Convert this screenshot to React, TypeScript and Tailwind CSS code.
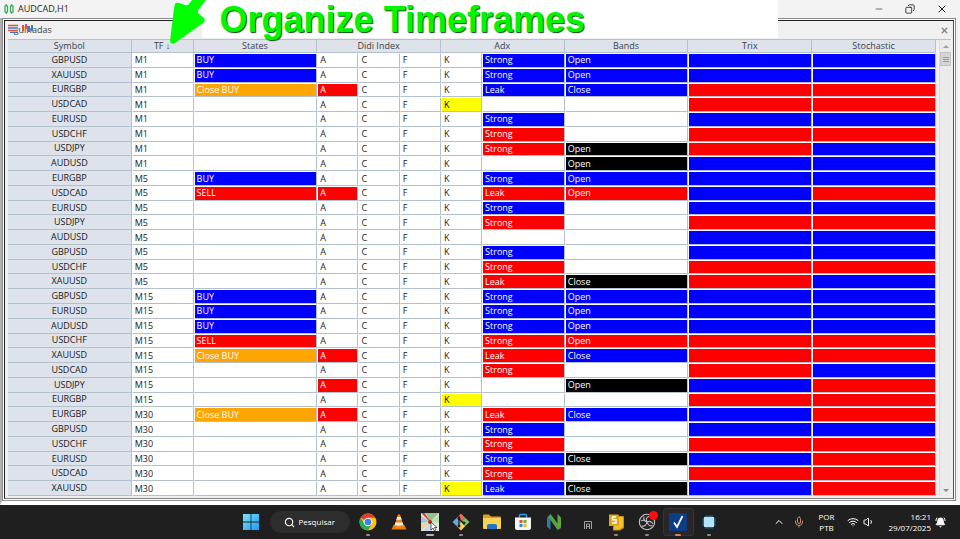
import type { ReactNode } from 'react';
import { BellRing, ChevronUp, Copy, Mic, Minus, Search, Volume1, Wifi, X } from 'lucide-react';

type Color = 'blue' | 'red' | 'orange' | 'yellow' | 'black' | 'none';

const CELL_COLORS: Record<Color, string> = {
  blue: 'bg-[#0000ff] text-white',
  red: 'bg-[#ff0000] text-white',
  orange: 'bg-[#ffa500] text-white',
  yellow: 'bg-[#ffff00] text-black',
  black: 'bg-black text-white',
  none: 'bg-white text-[#222222]',
};

const STATE_COLORS: Record<string, Color> = {
  BUY: 'blue',
  SELL: 'red',
  'Close BUY': 'orange',
};

const B = 'blue';
const R = 'red';
const K = 'black';

// symbol, timeframe, state, highlighted didi letter, adx, bands, trix, stochastic
type Row = [string, string, string, string, [string, Color] | null, [string, Color] | null, Color, Color];

const ROWS: Row[] = [
  ['GBPUSD', 'M1', 'BUY', '', ['Strong', B], ['Open', B], B, B],
  ['XAUUSD', 'M1', 'BUY', '', ['Strong', B], ['Open', B], B, B],
  ['EURGBP', 'M1', 'Close BUY', 'A', ['Leak', B], ['Close', B], R, R],
  ['USDCAD', 'M1', '', 'K', null, null, R, R],
  ['EURUSD', 'M1', '', '', ['Strong', B], null, B, B],
  ['USDCHF', 'M1', '', '', ['Strong', R], null, R, R],
  ['USDJPY', 'M1', '', '', ['Strong', R], ['Open', K], R, B],
  ['AUDUSD', 'M1', '', '', null, ['Open', K], B, B],
  ['EURGBP', 'M5', 'BUY', '', ['Strong', B], ['Open', B], B, B],
  ['USDCAD', 'M5', 'SELL', 'A', ['Leak', R], ['Open', R], B, R],
  ['EURUSD', 'M5', '', '', ['Strong', B], null, B, B],
  ['USDJPY', 'M5', '', '', ['Strong', R], null, R, R],
  ['AUDUSD', 'M5', '', '', null, null, B, B],
  ['GBPUSD', 'M5', '', '', ['Strong', B], null, B, B],
  ['USDCHF', 'M5', '', '', ['Strong', R], null, R, R],
  ['XAUUSD', 'M5', '', '', ['Leak', R], ['Close', K], R, B],
  ['GBPUSD', 'M15', 'BUY', '', ['Strong', B], ['Open', B], B, B],
  ['EURUSD', 'M15', 'BUY', '', ['Strong', B], ['Open', B], B, B],
  ['AUDUSD', 'M15', 'BUY', '', ['Strong', B], ['Open', B], B, B],
  ['USDCHF', 'M15', 'SELL', '', ['Strong', R], ['Open', R], R, R],
  ['XAUUSD', 'M15', 'Close BUY', 'A', ['Leak', R], ['Close', B], R, R],
  ['USDCAD', 'M15', '', '', ['Strong', R], null, R, B],
  ['USDJPY', 'M15', '', 'A', null, ['Open', K], B, R],
  ['EURGBP', 'M15', '', 'K', null, null, R, R],
  ['EURGBP', 'M30', 'Close BUY', 'A', ['Leak', R], ['Close', B], B, R],
  ['GBPUSD', 'M30', '', '', ['Strong', B], null, B, B],
  ['USDCHF', 'M30', '', '', ['Strong', R], null, R, R],
  ['EURUSD', 'M30', '', '', ['Strong', B], ['Close', K], B, R],
  ['USDCAD', 'M30', '', '', ['Strong', R], null, R, R],
  ['XAUUSD', 'M30', '', 'K', ['Leak', B], ['Close', K], B, R],
];

const HEADERS: [string, number][] = [
  ['Symbol', 1],
  ['TF ↓', 1],
  ['States', 1],
  ['Didi Index', 3],
  ['Adx', 2],
  ['Bands', 1],
  ['Trix', 1],
  ['Stochastic', 1],
];

const EDGE = 'border-t border-l border-r border-b border-t-white border-l-white border-r-[#b3c0ce] border-b-[#b3c0ce]';

function Cell({ color = 'none', children }: { color?: Color; children?: ReactNode }) {
  return <td className={`${EDGE} ${CELL_COLORS[color]} px-[2px] py-0 text-left`}>{children}</td>;
}

function SignalTable() {
  return (
    <table className="h-full w-full table-fixed border-separate border-spacing-0 text-[9px] leading-[12px]">
      <colgroup>
        <col className="w-[13.33%]" />
        <col className="w-[6.67%]" />
        <col className="w-[13.33%]" />
        <col className="w-[4.44%]" />
        <col className="w-[4.44%]" />
        <col className="w-[4.44%]" />
        <col className="w-[4.44%]" />
        <col className="w-[8.91%]" />
        <col className="w-[13.33%]" />
        <col className="w-[13.33%]" />
        <col className="w-[13.34%]" />
      </colgroup>
      <thead>
        <tr>
          {HEADERS.map(([label, span]) => (
            <th
              key={label}
              colSpan={span}
              scope="col"
              className="border-r border-b border-[#b3c0ce] bg-[#dde2eb] p-0 font-medium text-[#3f3f46]"
            >
              {label}
            </th>
          ))}
        </tr>
      </thead>
      <tbody>
        {ROWS.map(([symbol, tf, state, didi, adx, bands, trix, stoch]) => (
          <tr key={symbol + tf}>
            <th scope="row" className="border-r border-b border-[#b3c0ce] bg-[#dde2eb] p-0 font-medium text-[#1a1a1a]">
              {symbol}
            </th>
            <Cell>{tf}</Cell>
            <Cell color={STATE_COLORS[state]}>{state}</Cell>
            <Cell color={didi === 'A' ? 'red' : 'none'}>A</Cell>
            <Cell>C</Cell>
            <Cell>F</Cell>
            <Cell color={didi === 'K' ? 'yellow' : 'none'}>K</Cell>
            <Cell color={adx?.[1]}>{adx?.[0]}</Cell>
            <Cell color={bands?.[1]}>{bands?.[0]}</Cell>
            <Cell color={trix} />
            <Cell color={stoch} />
          </tr>
        ))}
      </tbody>
    </table>
  );
}

function Scrollbar() {
  return (
    <div className="flex w-3 flex-col items-center border-l border-[#d5dde3] bg-[#ebebeb]">
      <button aria-label="Scroll up" className="flex h-3 w-full items-center justify-center">
        <svg viewBox="0 0 6 3" className="h-[3px] w-[6px]">
          <path d="M0 3 3 0l3 3z" fill="#a0a0a0" />
        </svg>
      </button>
      <div className="flex h-[14px] w-full flex-col items-center justify-center gap-px border border-[#c4c4c4] bg-[#d4d4d4]">
        <span className="h-px w-[6px] bg-[#999999]" />
        <span className="h-px w-[6px] bg-[#999999]" />
        <span className="h-px w-[6px] bg-[#999999]" />
      </div>
      <div className="flex-1" />
      <button aria-label="Scroll down" className="flex h-3 w-full items-center justify-center">
        <svg viewBox="0 0 6 3" className="h-[3px] w-[6px]">
          <path d="M0 0h6L3 3z" fill="#8a8a8a" />
        </svg>
      </button>
    </div>
  );
}

function Banner() {
  return (
    <div className="absolute top-0 left-[21%] h-[38px] w-[60%] bg-white pl-[18px]">
      <svg viewBox="0 0 40 46" className="absolute -left-8 top-0 h-[46px] w-10">
        <path
          d="M5 4q1-2 4-1l6 2q2 1 4-1l3-4h14l-8 10q-1 2 1 4l5 4q2 3-1 5L5 43q-4 2-5-2L4 8z"
          fill="#00ff00"
        />
      </svg>
      <h1 className="whitespace-nowrap font-['Liberation_Sans',sans-serif] text-[36px] leading-[40px] font-bold text-[#00f500] [text-shadow:1px_1px_1px_#064d06]">
        Organize Timeframes
      </h1>
    </div>
  );
}

function Slot({ label, mark = '', active, children }: { label: string; mark?: string; active?: boolean; children: ReactNode }) {
  return (
    <button
      aria-label={label}
      className={`relative flex h-7 w-[31px] items-center justify-center rounded-sm ${active ? 'bg-[#2a2627] ring-1 ring-[#373334] ring-inset' : ''}`}
    >
      {children}
      {mark && <span className={`absolute bottom-0 h-[2px] rounded-full ${mark}`} />}
    </button>
  );
}

function Taskbar() {
  const icon = 'h-[18px] w-[18px]';
  const dot = 'w-1 bg-[#8d8d8d]';
  return (
    <footer className="flex h-[34px] shrink-0 items-center bg-[#1f1f1f] font-['Open_Sans',sans-serif] text-white">
      <div className="flex-1" />
      <nav className="flex items-center">
        <Slot label="Start">
          <svg viewBox="0 0 18 18" className={icon}>
            <defs>
              <linearGradient id="win" x1="0" y1="0" x2="1" y2="1">
                <stop offset="0" stopColor="#7ee0ff" />
                <stop offset="1" stopColor="#1c9cf0" />
              </linearGradient>
            </defs>
            <path d="M1 1h7.6v7.6H1zM9.400 1H17v7.600H9.400zM1 9.400h7.600V17H1zM9.400 9.400H17V17H9.400z" fill="url(#win)" />
          </svg>
        </Slot>
        <button className="mx-[3px] flex h-[22px] w-20 items-center gap-1 rounded-full bg-[#2d2d2d] pl-[14px] text-[8px]">
          <Search size={11} strokeWidth={2.5} />
          Pesquisar
        </button>
        <Slot label="Chrome" mark={dot}>
          <svg viewBox="0 0 18 18" className={icon}>
            <circle cx="9" cy="9" r="8.500" fill="#fbc116" />
            <path d="M9 9 1.640 4.750A8.500 8.500 0 0 1 16.360 4.750H9z" fill="#e33b2e" />
            <path d="M1.640 4.750A8.500 8.500 0 0 0 9 17.500l3.700-6.400L9 9 5.300 11.100z" fill="#2da94f" />
            <circle cx="9" cy="9" r="4.300" fill="#fff" />
            <circle cx="9" cy="9" r="3.300" fill="#3f7fe8" />
          </svg>
        </Slot>
        <Slot label="VLC">
          <svg viewBox="0 0 18 18" className={icon}>
            <path d="M3.500 12h11l2 4.500h-15z" fill="#e8780c" />
            <path d="M8 1.500h2L14 14q-5 2-10 0z" fill="#f08a1c" />
            <path d="M7.200 4h3.600l.9 2.800H6.300zM5.400 9.500h7.200l.8 2.500q-4.400 1.300-8.800 0z" fill="#f4eee6" />
          </svg>
        </Slot>
        <Slot label="Forex terminal" mark="w-2 bg-[#b5b5b5]">
          <svg viewBox="0 0 18 18" className={icon}>
            <path d="M0 0h18v18H0z" fill="#e4e9da" />
            <path d="M0 0h4l5 9z" fill="#d9534f" />
            <path d="M0 3l9 6-9 1z" fill="#9fc5e0" />
            <path d="M5 0h13L9 9z" fill="#8fc48c" />
            <path d="M18 2v8L9 9z" fill="#b9dfb4" />
            <path d="M0 18V11l9-2z" fill="#efd58c" />
            <path d="M2 18 9 9l2 9z" fill="#c9d8ee" />
            <path d="M2 0l8 9" stroke="#c83838" strokeWidth="1" />
            <circle cx="9" cy="9" r="2" fill="#d02020" />
            <path d="M10 9v8l2-2 1.500 3 1.500-1-1.500-2.500H16z" fill="#fff" stroke="#222" strokeWidth=".7" />
          </svg>
        </Slot>
        <Slot label="Git" mark={dot}>
          <svg viewBox="0 0 18 18" className={icon}>
            <path d="M9 .5 13.200 4.800 9 9 4.800 4.800z" fill="#e96a55" />
            <path d="M13.200 4.800 17.500 9l-4.300 4.200L9 9z" fill="#7bc06a" />
            <path d="M4.800 4.800 9 9l-4.200 4.200L.5 9z" fill="#6fa4dc" />
            <path d="M9 9l4.200 4.200L9 17.500l-4.200-4.300z" fill="#f3d26b" />
            <path d="M7 3v11M7 6l4.500 4" stroke="#222" strokeWidth="1.300" fill="none" />
            <circle cx="7" cy="5.500" r="1.500" fill="#222" />
            <circle cx="12" cy="10" r="1.500" fill="#222" />
            <circle cx="7" cy="13" r="1.500" fill="#222" />
          </svg>
        </Slot>
        <Slot label="Explorer">
          <svg viewBox="0 0 18 18" className={icon}>
            <path d="M0 2.500q0-1 1-1h5l2 2h9q1 0 1 1V15H0z" fill="#dfa020" />
            <path d="M0 5h18v10q0 1-1 1H1q-1 0-1-1z" fill="#fbd354" />
            <path d="M4 16v-3q0-2 2-2h6q2 0 2 2v3z" fill="#1f75c4" />
          </svg>
        </Slot>
        <Slot label="Store">
          <svg viewBox="0 0 18 18" className={icon}>
            <path d="M5.500 5V2.500q0-1 1-1h5q1 0 1 1V5" fill="none" stroke="#2ba4e0" strokeWidth="1.400" />
            <path d="M1 4.500h16V15q0 2-2 2H3q-2 0-2-2z" fill="#f3f6f8" />
            <path d="M5.500 7h3v3h-3z" fill="#e8502e" />
            <path d="M9.500 7h3v3h-3z" fill="#6fae2c" />
            <path d="M5.500 11h3v3h-3z" fill="#2b8fd8" />
            <path d="M9.500 11h3v3h-3z" fill="#f5b81e" />
          </svg>
        </Slot>
        <Slot label="Neovim">
          <svg viewBox="0 0 18 18" className={icon}>
            <path d="M2 4.500 5.500 1v16L2 13.500z" fill="#2a7cab" />
            <path d="M5.500 1 16 15l-3.500 2L3.500 4z" fill="#57a143" />
            <path d="M12.500 1 16 4.500V15l-3.500-3z" fill="#63a83e" />
          </svg>
        </Slot>
        <span className="flex h-7 w-[31px] items-end justify-center pb-[7px] pl-[6px]">
          <svg viewBox="0 0 8 8" className="h-2 w-2" fill="none" stroke="#a0a0a0" strokeWidth="1">
            <path d="M.5 8V.5h7V8M2.500 8V3h3v5M2.500 5.500h3" />
          </svg>
        </span>
        <Slot label="Sublime" mark={dot}>
          <svg viewBox="0 0 18 18" className={icon}>
            <path d="M6 3h10q1 0 1 1v11l-4 2.500H6z" fill="#c98f10" />
            <path d="M7 4h9v10l-4 2.500H7z" fill="#f2c230" />
            <path d="M2 1.500h9q1 0 1 1V12q0 1-1 1H2z" fill="#e0a416" />
            <path d="M9 4H5.500v2.800H9V10H5" fill="none" stroke="#fff" strokeWidth="1.500" />
          </svg>
        </Slot>
        <Slot label="OBS" mark={dot}>
          <svg viewBox="0 0 18 18" className={icon}>
            <circle cx="9" cy="9" r="7.700" fill="#242326" stroke="#c4c4c4" strokeWidth="1.100" />
            <path
              d="M9 9Q5 8 6 3.500M9 9q4-2 6 2M9 9q-1 5-5.500 4M11 3.500q-4 1-2 5.500M14.500 12.500Q11 14 9 9M3 8q3-2 6 1"
              fill="none"
              stroke="#bdbdbd"
              strokeWidth="1.100"
            />
          </svg>
          <span className="absolute top-[3px] right-[5px] h-[9px] w-[9px] rounded-full bg-[#ff0d0d]" />
        </Slot>
        <Slot label="Tasks" active mark="w-[6px] bg-[#e08060]">
          <svg viewBox="0 0 18 18" className={icon}>
            <path d="M0 0h18v18H0z" fill="#0d3d85" />
            <path d="m5 9.500 3 4.500 5.500-11" fill="none" stroke="#fff" strokeWidth="1.700" />
          </svg>
        </Slot>
        <Slot label="Chip" mark={dot}>
          <svg viewBox="0 0 18 18" className={icon}>
            <path
              d="M6 2.500v13M8 2.500v13M10 2.500v13M12 2.500v13M2.500 6h13M2.500 8h13M2.500 10h13M2.500 12h13"
              stroke="#2f9be0"
              strokeWidth="1"
            />
            <path d="M4 4h10v10H4z" fill="#b5e4fb" />
          </svg>
        </Slot>
      </nav>
      <div className="flex flex-1 justify-end">
        <div className="flex items-center pr-[14px] text-[8px] leading-[11px]">
          <ChevronUp size={12} className="mr-2" />
          <Mic size={12} className="mr-[14px] text-[#c98a6a]" />
          <span className="mr-3 text-center">
            POR
            <br />
            PTB
          </span>
          <Wifi size={12} className="mr-1" />
          <Volume1 size={12} className="mr-[14px]" />
          <time className="mr-1 text-right">
            16:21
            <br />
            29/07/2025
          </time>
          <BellRing size={11} className="fill-white" />
        </div>
      </div>
    </footer>
  );
}

export default function App() {
  return (
    <div className="relative flex h-screen flex-col bg-[#f3f3f3] font-['Open_Sans',sans-serif]">
      <header className="flex h-[18px] shrink-0 items-center px-1 text-[#1f1f1f]">
        <svg viewBox="0 0 10 12" className="h-3 w-[10px]" fill="none" stroke="#2fa84f" strokeWidth="1.200">
          <path d="M1 3h2.500v6H1zM6.500 3H9v6H6.500zM2.250 1v2M2.250 9v2M7.750 1v2M7.750 9v2" />
        </svg>
        <span className="ml-1 text-[9px] leading-[14px]">AUDCAD,H1</span>
        <div className="ml-auto flex items-center gap-[21px] pr-2">
          <button aria-label="Minimize">
            <Minus size={10} strokeWidth={1.5} />
          </button>
          <button aria-label="Restore">
            <Copy size={10} className="-scale-x-100" />
          </button>
          <button aria-label="Close">
            <X size={12} />
          </button>
        </div>
      </header>
      <main className="flex min-h-0 flex-1 border-b-4 border-l-2 border-b-white border-l-[#b0b0b0] pr-1">
        <div className="flex min-h-0 flex-1 border border-[#8a8a8a] bg-white p-px">
          <section className="flex min-h-0 flex-1 flex-col border border-t-[#202020] border-r-[#505050] border-b-[#808080] border-l-[#202020] bg-[#f0f0f0] pr-[2px] pb-[2px] pl-[3px]">
            <div className="relative flex h-[18px] shrink-0 items-center justify-between text-[9px] leading-[12px] text-[#3f3f46]">
              <h2>Agulhadas</h2>
              <svg viewBox="0 0 26 9" className="absolute top-[3px] left-0 h-[9px] w-[26px]" fill="none">
                <path d="M0 0h10v9H0z" fill="#f0f0f0" />
                <path d="M0 1.500h10M0 6.500h10" stroke="#e0523c" strokeWidth="1.500" />
                <path d="M0 4h10M2 8.500h8" stroke="#3f78c0" strokeWidth="1.500" />
                <path d="M15 1v6M18 0v5" stroke="#e0523c" strokeWidth="2" />
                <path d="M21 2v6M24 1v6" stroke="#3f78c0" strokeWidth="2" />
              </svg>
              <button aria-label="Close panel" className="pr-[2px] text-[#8a8a8a]">
                <X size={9} strokeWidth={4} />
              </button>
            </div>
            <div className="flex min-h-0 flex-1 gap-[3px] border-t border-[#b3c0ce]">
              <div className="h-full min-w-0 flex-1 bg-white">
                <SignalTable />
              </div>
              <Scrollbar />
            </div>
          </section>
        </div>
      </main>
      <Banner />
      <Taskbar />
    </div>
  );
}
